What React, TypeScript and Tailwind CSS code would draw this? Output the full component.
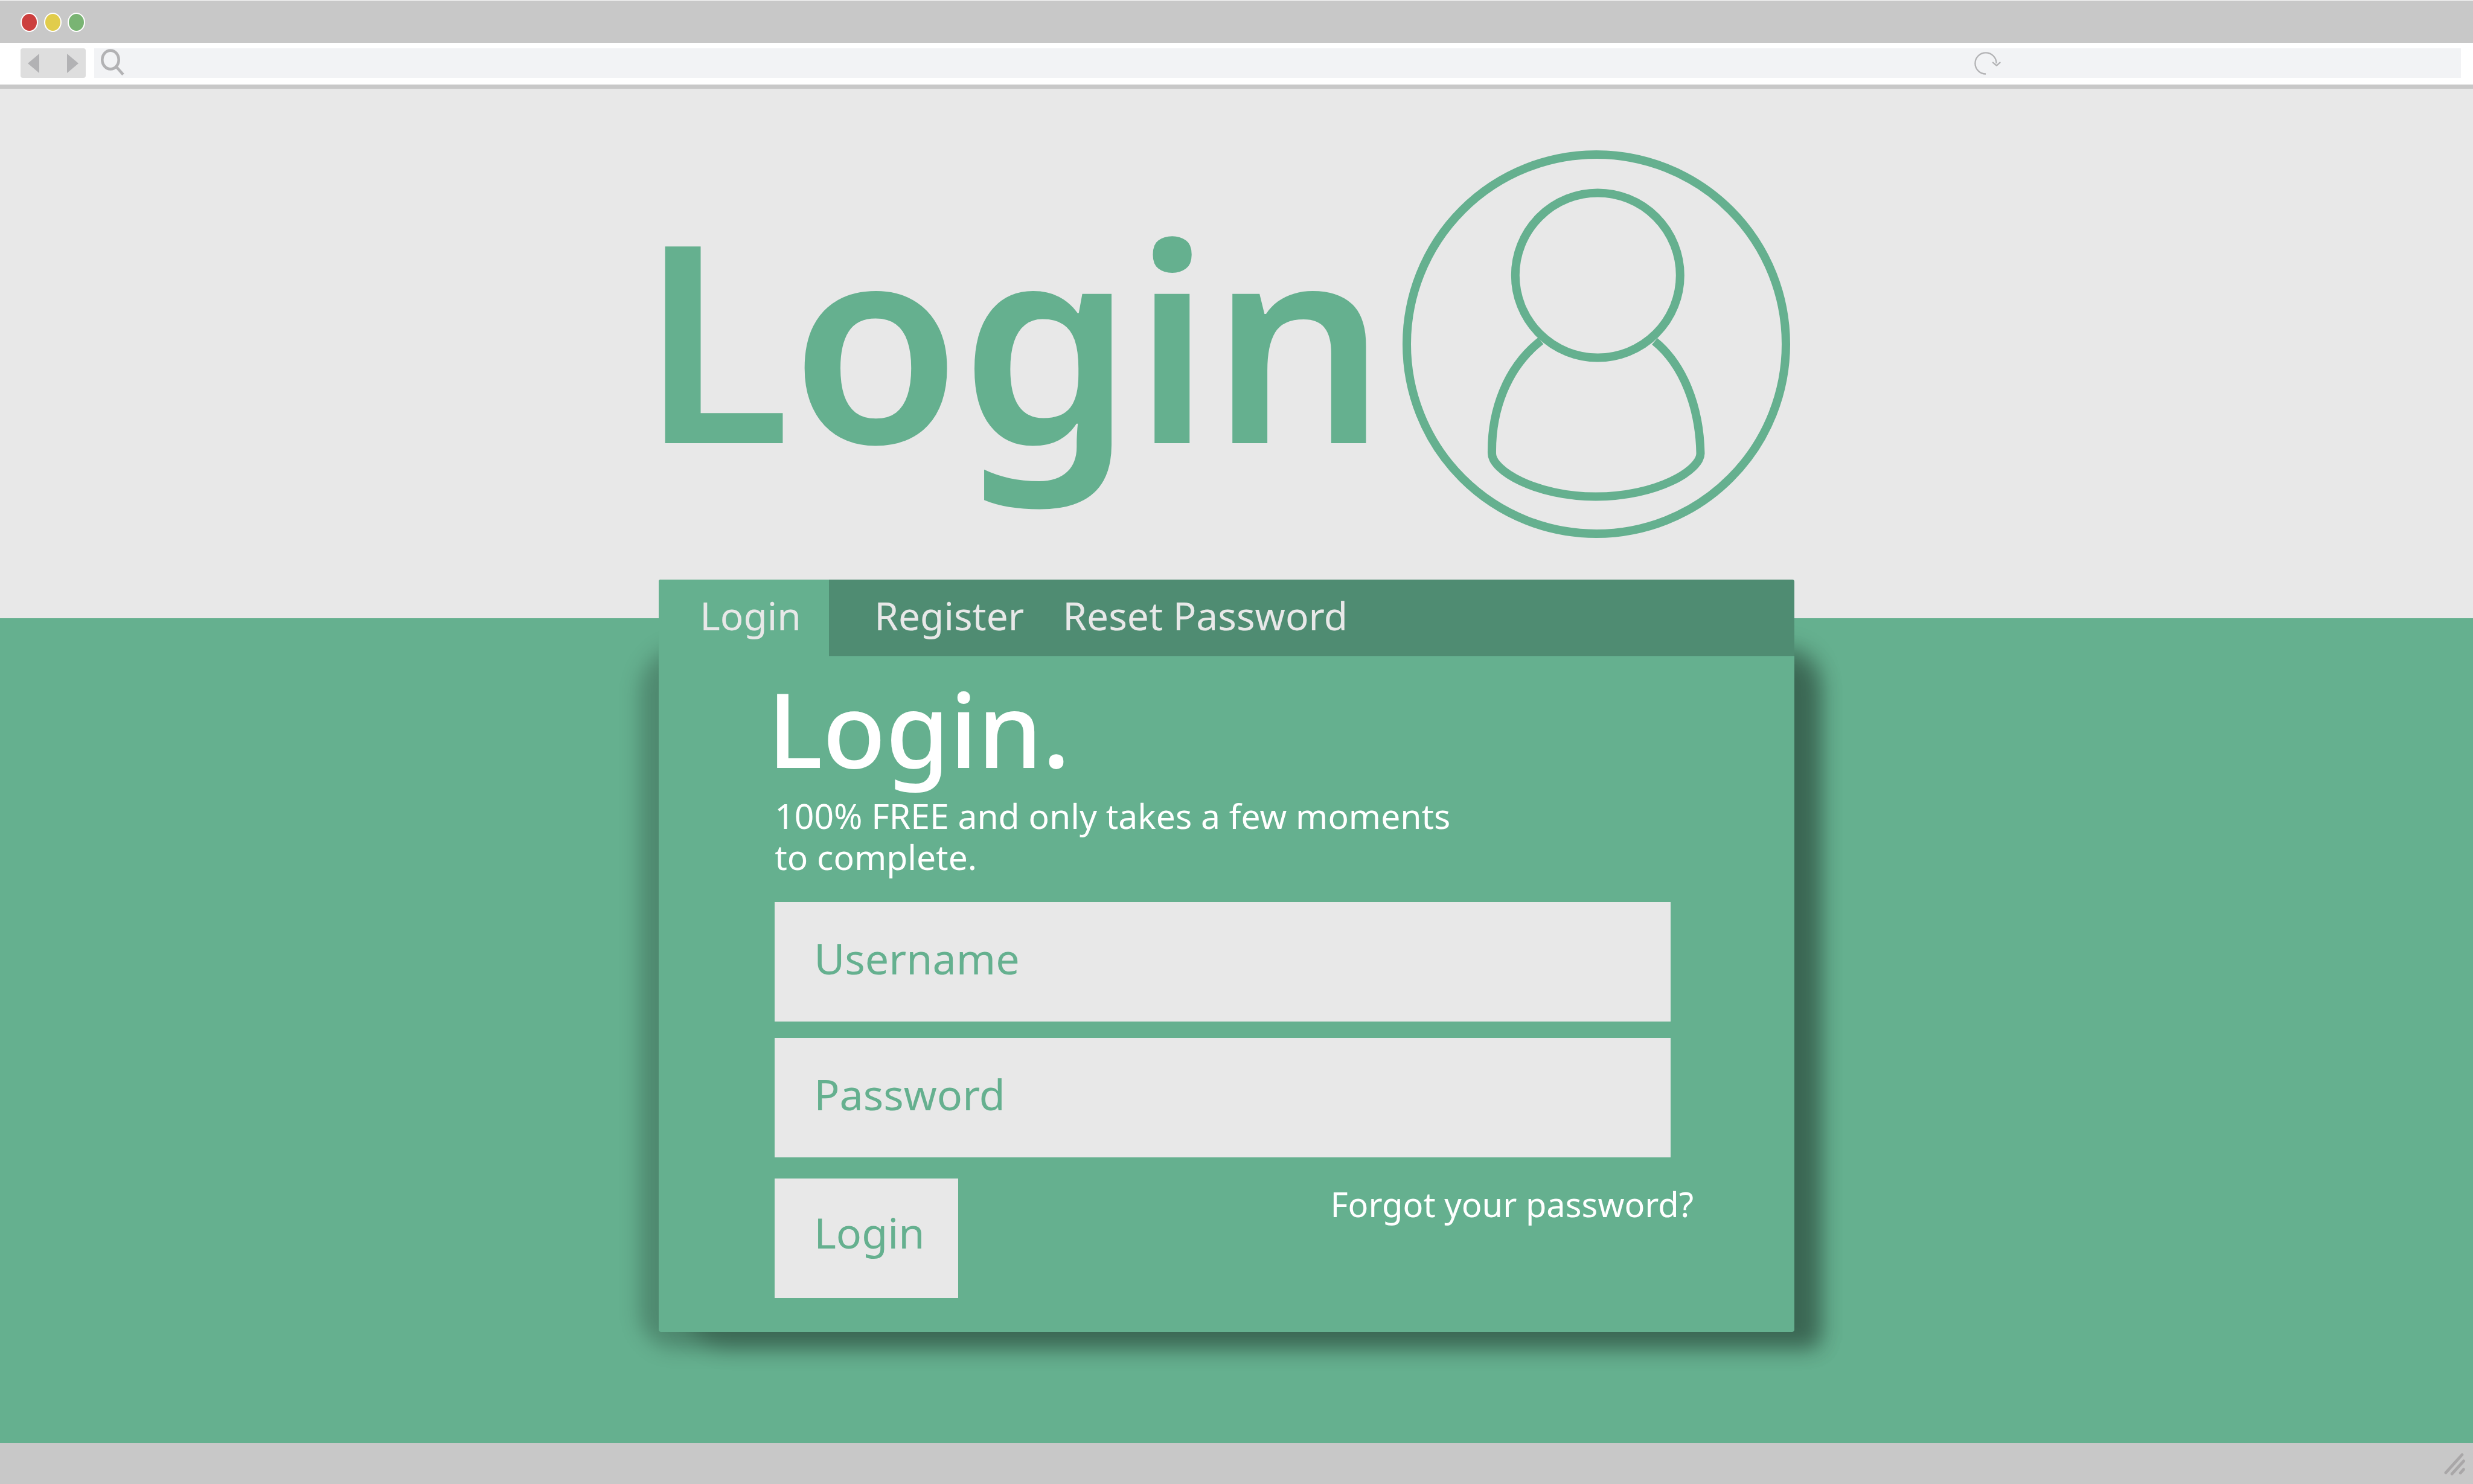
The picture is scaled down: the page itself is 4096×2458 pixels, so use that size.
import type { ReactNode } from "react";

function WindowDot({ label, color }: { label: string; color: string }) {
  return (
    <button
      type="button"
      aria-label={label}
      className={`h-8 w-[29px] rounded-[50%] border-2 border-white ${color}`}
    />
  );
}

function TitleBar() {
  return (
    <div className="flex h-[71px] items-center gap-[10px] border-t-2 border-[#e8e8e8] bg-[#c8c8c8] pl-[34px]">
      <WindowDot label="Close" color="bg-[#cc3f3e]" />
      <WindowDot label="Minimise" color="bg-[#e1cc4b]" />
      <WindowDot label="Maximise" color="bg-[#79b473]" />
    </div>
  );
}

function SearchIcon() {
  return (
    <svg viewBox="0 0 50 49" className="h-[49px] w-[50px] shrink-0" fill="none" stroke="#b2b2b4" aria-hidden="true">
      <ellipse cx="27" cy="19" rx="13.7" ry="15.4" strokeWidth="4.6" />
      <path d="M36.5 30.6 48 43.6" strokeWidth="4.6" />
    </svg>
  );
}

function ReloadIcon() {
  return (
    <svg viewBox="0 0 46 49" className="h-[49px] w-[46px]" fill="none" stroke="#b2b2b4" strokeWidth="2.3" aria-hidden="true">
      <path d="M36.6 24.9A17.6 17.6 0 1 0 19 42.5" />
      <path d="M31 23.6l5.9 5 5.6-5" strokeLinecap="round" strokeLinejoin="round" />
    </svg>
  );
}

function Toolbar() {
  return (
    <div className="flex h-[76px] items-start gap-[14px] border-b-[7px] border-[#c8c8c8] bg-white pt-[9px] pr-5 pl-[34px]">
      <div className="flex h-[49px] w-[108px] items-center justify-between rounded bg-[#dedede] px-3">
        <button type="button" aria-label="Back">
          <svg viewBox="0 0 19 32" className="h-8 w-[19px]" fill="#b2b2b4" aria-hidden="true">
            <path d="M19 0v32L0 16z" />
          </svg>
        </button>
        <button type="button" aria-label="Forward">
          <svg viewBox="0 0 19 32" className="h-8 w-[19px]" fill="#b2b2b4" aria-hidden="true">
            <path d="M0 0v32l19-16z" />
          </svg>
        </button>
      </div>
      <div className="flex h-[49px] flex-1 items-center bg-[#f2f3f5]">
        <SearchIcon />
        <input type="text" aria-label="Address" className="h-full flex-1 bg-transparent px-4 text-3xl outline-none" />
        <button type="button" aria-label="Reload" className="mr-[19.4%]">
          <ReloadIcon />
        </button>
      </div>
    </div>
  );
}

function Avatar() {
  return (
    <svg viewBox="0 0 642 642" className="h-[642px] w-[642px] shrink-0" fill="none" stroke="#65b08f" strokeWidth="14" aria-hidden="true">
      <circle cx="321" cy="321" r="314" />
      <circle cx="323.3" cy="207" r="136.5" />
      <path d="M229 315.5C172 360 147 432 148 502C148 530 220 573.5 320 573.5C421 573.5 493.5 530 493.5 502C492 425 465 355 417.6 316.3" />
    </svg>
  );
}

function Hero() {
  return (
    <header className="bg-[#e8e8e8] pt-[102px] pb-[133px]">
      <div className="ml-[25.9%] flex w-[46.5%] items-center justify-between">
        <h1 className="pb-6 text-[456px] leading-none font-semibold text-[#65b08f]">Login</h1>
        <Avatar />
      </div>
    </header>
  );
}

function Tabs() {
  return (
    <nav className="flex h-[127px] overflow-hidden rounded-t bg-[#4f8c72] text-[64px] leading-none text-[#e8e8e8]">
      <a href="#login" aria-current="page" className="flex w-[282px] items-center bg-[#65b08f] pb-2 pl-[68px]">
        Login
      </a>
      <div className="flex items-center gap-16 pb-2 pl-[75px]">
        <a href="#register">Register</a>
        <a href="#reset">Reset Password</a>
      </div>
    </nav>
  );
}

function Field({ type, label }: { type: string; label: string }) {
  return (
    <input
      type={type}
      aria-label={label}
      placeholder={label}
      className="block h-[198px] w-full bg-[#e8e8e8] pb-3 pl-[65px] text-[70px] text-[#65b08f] outline-none placeholder:text-[#65b08f] placeholder:opacity-100"
    />
  );
}

function Card({ children }: { children: ReactNode }) {
  return (
    <div className="relative isolate -mt-16 ml-[26.64%] w-[45.92%]">
      {/* two soft layers: the wide one spills out on the left, the narrow one deepens the right and bottom */}
      <div className="absolute top-[108px] -right-[45px] -bottom-[28px] -left-[32px] -z-10 rounded-tl-[80px] rounded-tr-[60px] rounded-br-[20px] rounded-bl-[60px] bg-black/22 blur-[16px]" />
      <div className="absolute top-[128px] -right-[42px] -bottom-[26px] left-[40px] -z-10 rounded-tl-[80px] rounded-tr-[60px] rounded-br-[20px] rounded-bl-[80px] bg-black/25 blur-[18px]" />
      <div className="rounded bg-[#65b08f]">{children}</div>
    </div>
  );
}

function LoginForm() {
  return (
    <form className="pt-[33px] pr-[167px] pb-14 pl-48" onSubmit={(e) => e.preventDefault()}>
      <h2 className="-ml-3 text-[171px] leading-none font-medium text-white">Login.</h2>
      <p className="mt-[26px] text-[57px] leading-[68px] text-white">
        100% FREE and only takes a few moments
        <br />
        to complete.
      </p>
      <div className="mt-[41px] mr-[38px] flex flex-col gap-[27px]">
        <Field type="text" label="Username" />
        <Field type="password" label="Password" />
      </div>
      <div className="mt-[35px] flex items-start justify-between">
        <button type="submit" className="h-[198px] w-[304px] bg-[#e8e8e8] pb-5 pl-[65px] text-left text-[70px] leading-none text-[#65b08f]">
          Login
        </button>
        <a href="#forgot" className="mt-2 text-[56px] leading-[68px] text-white">
          Forgot your password?
        </a>
      </div>
    </form>
  );
}

function StatusBar() {
  return (
    <footer className="flex h-[68px] items-center justify-end bg-[#c8c8c8] pr-[10px]">
      <svg viewBox="0 0 40 40" className="h-10 w-10" fill="none" stroke="#a9a7a8" strokeWidth="4.8" strokeLinecap="round" aria-hidden="true">
        <path d="M4.9 35.3 31.9 5.5M15.2 37.2 34.6 15.9M29.2 35.6 34.4 29.8" />
      </svg>
    </footer>
  );
}

export default function App() {
  return (
    <div className="flex min-h-screen flex-col bg-[#65b08f] font-['Noto_Sans',sans-serif]">
      <TitleBar />
      <Toolbar />
      <Hero />
      <main className="flex-1">
        <Card>
          <Tabs />
          <LoginForm />
        </Card>
      </main>
      <StatusBar />
    </div>
  );
}
